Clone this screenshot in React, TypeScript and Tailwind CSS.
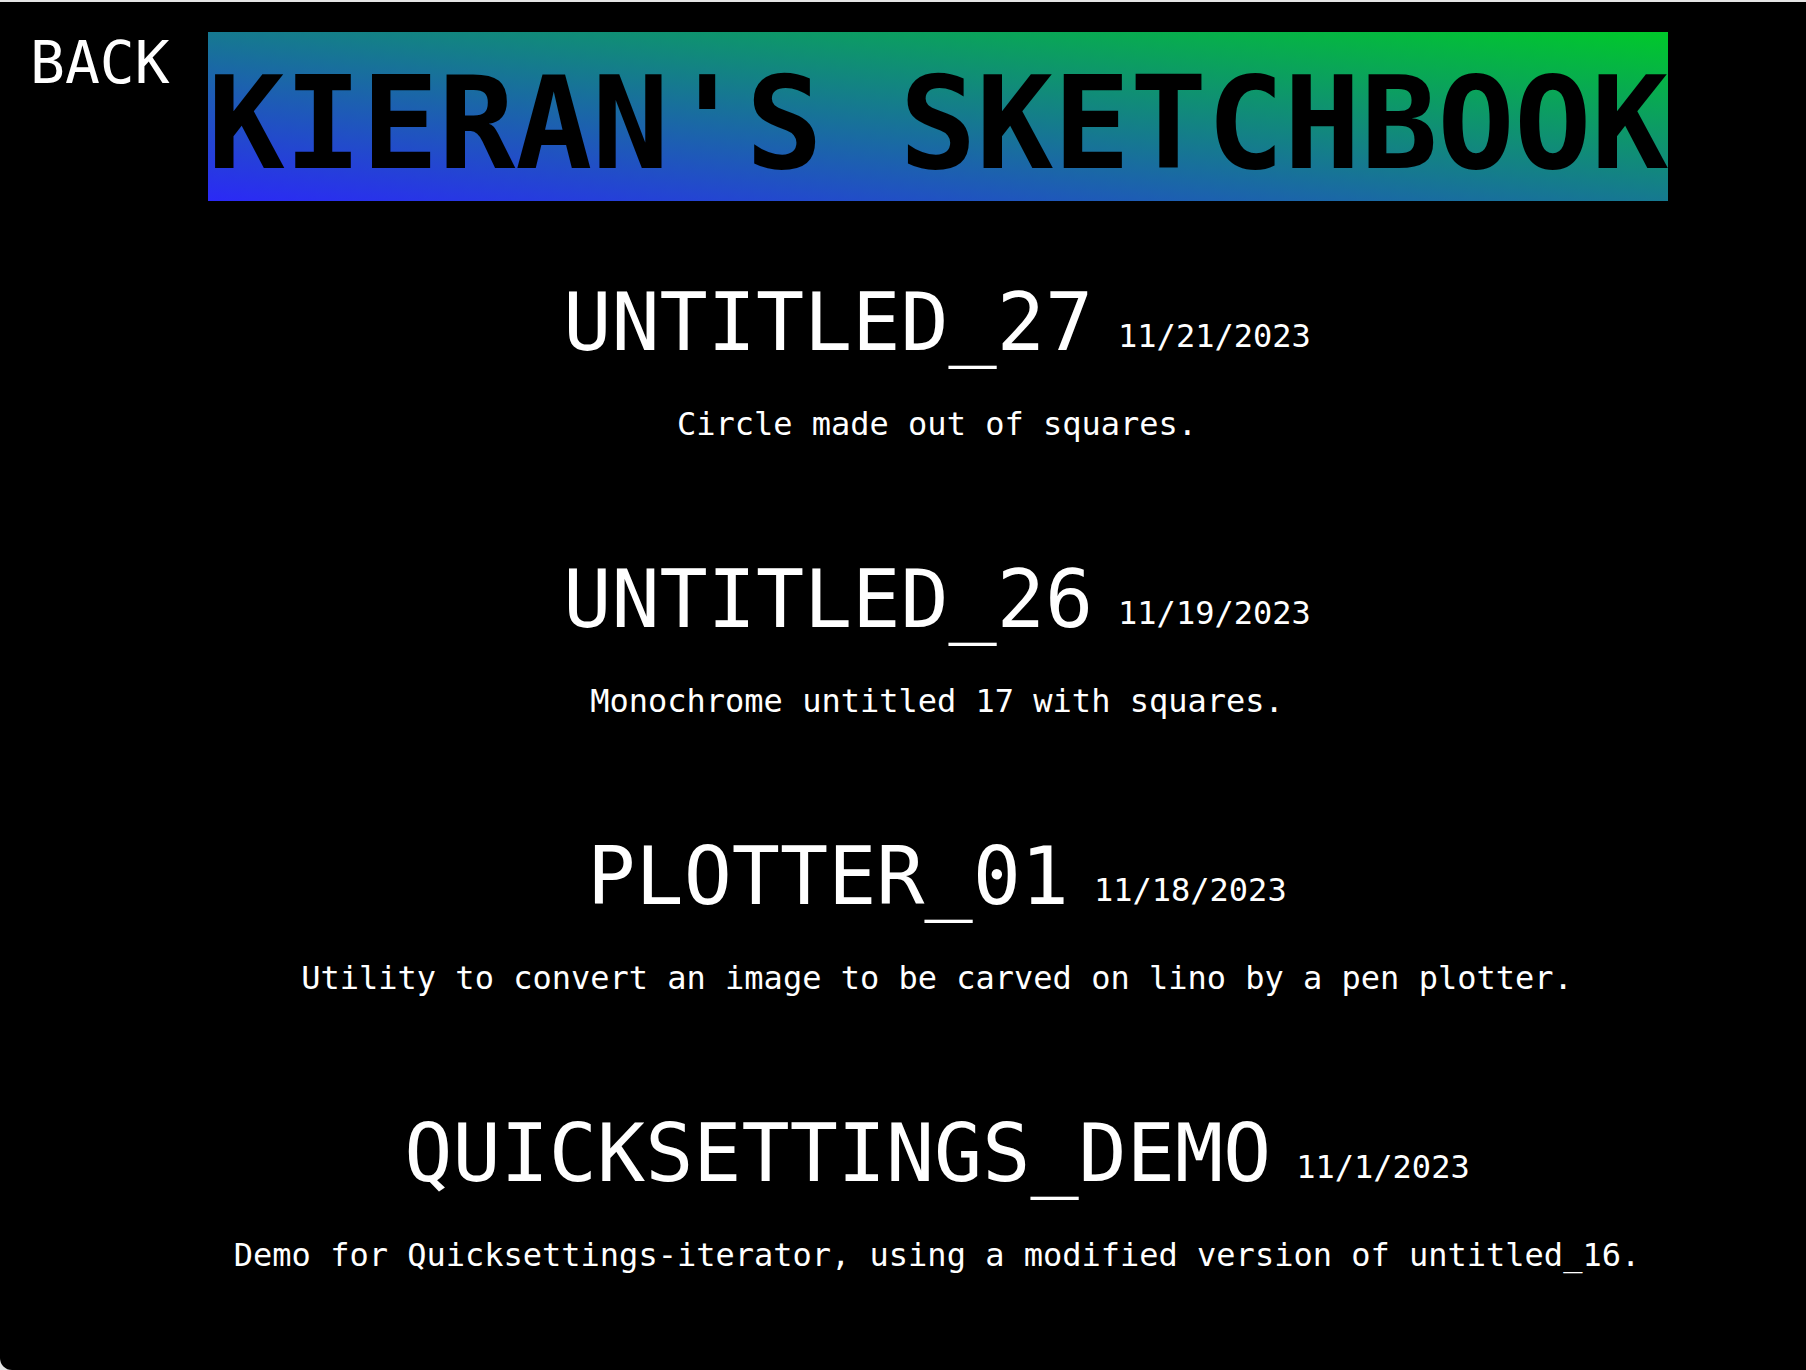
const entries = [
  { title: "UNTITLED_27", date: "11/21/2023", desc: "Circle made out of squares." },
  { title: "UNTITLED_26", date: "11/19/2023", desc: "Monochrome untitled 17 with squares." },
  { title: "PLOTTER_01", date: "11/18/2023", desc: "Utility to convert an image to be carved on lino by a pen plotter." },
  {
    title: "QUICKSETTINGS_DEMO",
    date: "11/1/2023",
    desc: "Demo for Quicksettings-iterator, using a modified version of untitled_16.",
  },
];

export default function App() {
  return (
    <div className="min-h-screen bg-[#e4e4e4] pt-[2px] font-['DejaVu_Sans_Mono',monospace]">
      <div className="min-h-[1368px] rounded-bl-[12px] bg-black pt-[30px] text-white">
        <header className="flex items-start">
          <a href="#" className="ml-[30px] mt-[2px] text-[58px] leading-[58px] text-white">
            BACK
          </a>
          <h1 className="ml-[38px] h-[169px] whitespace-nowrap bg-[linear-gradient(to_top_right,#2b29f6,#00c92a)] pt-[14px] text-[128px] font-bold leading-[155px] tracking-[-0.2px] text-black">
            KIERAN'S SKETCHBOOK
          </h1>
        </header>
        <main className="flex flex-col items-center gap-[110px] pl-[68px] pt-[75px]">
          {entries.map((e) => (
            <section key={e.title} className="flex flex-col items-center">
              <div className="flex items-end gap-[25px]">
                <h2 className="whitespace-nowrap text-[80px] leading-[94px]">{e.title}</h2>
                <span className="mb-[15px] whitespace-nowrap text-[32px] leading-[37px]">{e.date}</span>
              </div>
              <p className="mt-[36px] whitespace-nowrap text-[32px] leading-[37px]">{e.desc}</p>
            </section>
          ))}
        </main>
      </div>
    </div>
  );
}
